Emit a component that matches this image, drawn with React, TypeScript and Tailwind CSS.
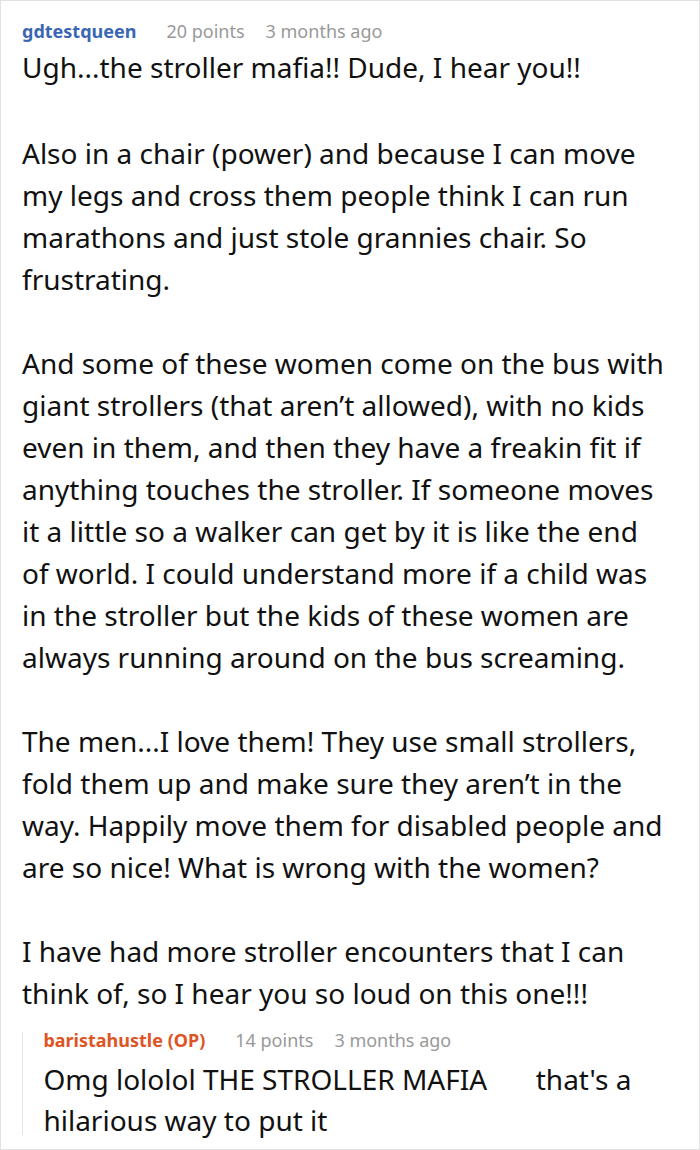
const font = { fontFamily: '"Noto Sans", "Open Sans", sans-serif' };

function Meta({ name, nameClass, points, time }: { name: string; nameClass: string; points: string; time: string }) {
  return (
    <div className="flex items-baseline text-[18px] leading-[24px]">
      <span className={`font-bold ${nameClass}`}>{name}</span>
      <span className="ml-[30px] text-[#999]">{points}</span>
      <span className="ml-[21px] text-[#999]">{time}</span>
    </div>
  );
}

export default function App() {
  return (
    <div className="h-[1150px] w-[700px] overflow-hidden border border-[#e2e2e2] bg-white text-[#1a1a1a]" style={font}>
      <div className="pl-[21px] pr-[34px] pt-[18px]">
        <Meta name="gdtestqueen" nameClass="text-[#3a67b3]" points="20 points" time="3 months ago" />
        <div className="mt-[3px] text-[28px] leading-[42px] text-[#111]">
          <p>Ugh...the stroller mafia!! Dude, I hear you!!</p>
          <p className="mt-[44px]">
            Also in a chair (power) and because I can move my legs and cross them people think I can run marathons and just
            stole grannies chair. So frustrating.
          </p>
          <p className="mt-[42px]">
            And some of these women come on the bus with giant strollers (that aren’t allowed), with no kids even in them,
            and then they have a freakin fit if anything touches the stroller. If someone moves it a little so a walker can
            get by it is like the end of world. I could understand more if a child was in the stroller but the kids of these
            women are always running around on the bus screaming.
          </p>
          <p className="mt-[42px]">
            The men...I love them! They use small strollers, fold them up and make sure they aren’t in the way. Happily move
            them for disabled people and are so nice! What is wrong with the women?
          </p>
          <p className="mt-[42px]">
            I have had more stroller encounters that I can think of, so I hear you so loud on this one!!!
          </p>
        </div>
        <div className="mt-[14px] flex">
          <div className="mt-[4px] mb-[6px] w-[2px] bg-[#e6e6e6]" />
          <div className="pl-[20px]">
            <Meta name="baristahustle (OP)" nameClass="text-[#de5424]" points="14 points" time="3 months ago" />
            <div className="mt-[7px] text-[28px] leading-[41px] text-[#111]">
              Omg lololol THE STROLLER MAFIA <span className="inline-block w-[34px]" /> that's a hilarious way to put it
            </div>
          </div>
        </div>
      </div>
    </div>
  );
}
